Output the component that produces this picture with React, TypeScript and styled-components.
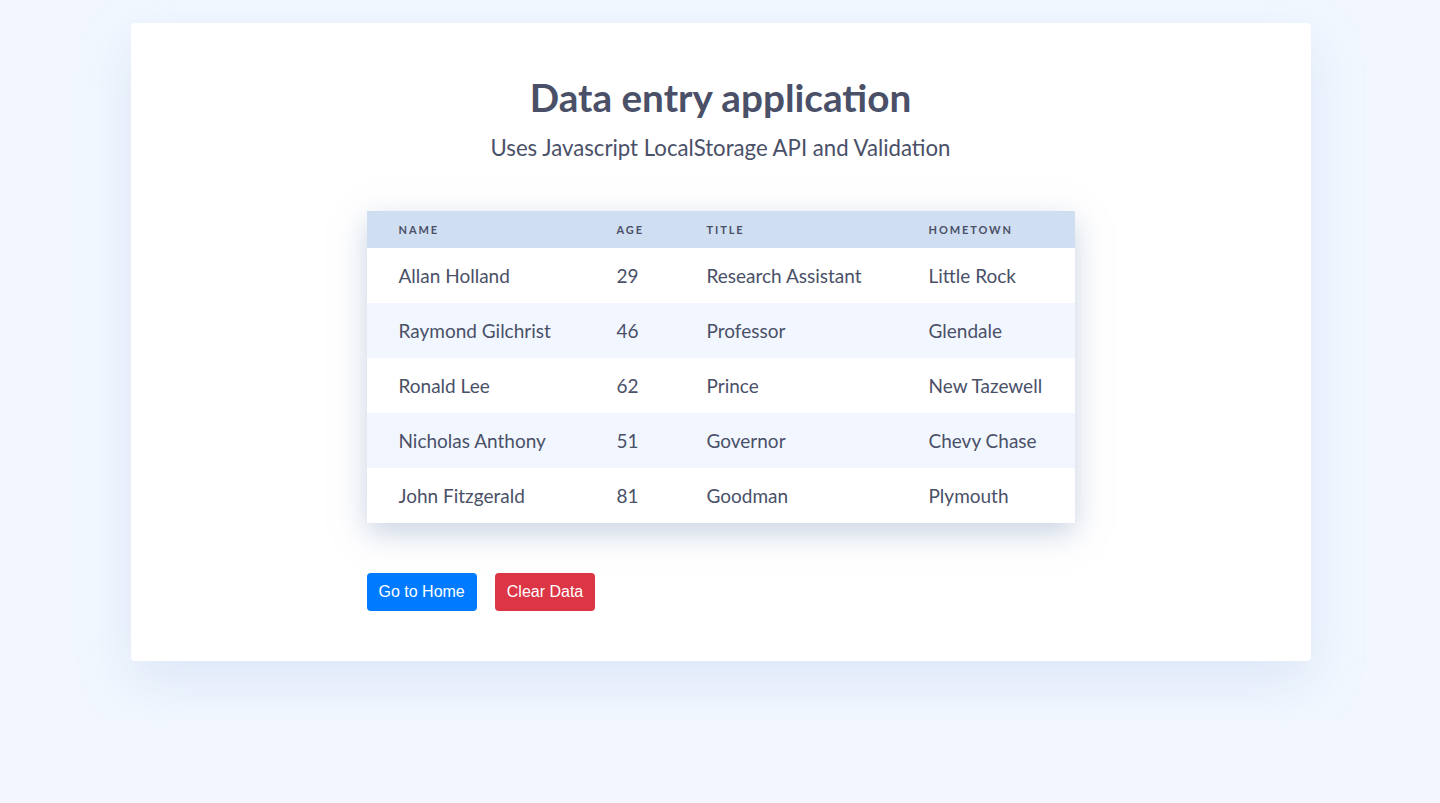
import styled, { createGlobalStyle } from 'styled-components';

const GlobalStyle = createGlobalStyle`
  html, body {
    margin: 0;
    padding: 0;
    background-color: #f2f7ff;
    font-family: Lato, 'Open Sans', sans-serif;
    color: #4a5068;
  }
`;

const Page = styled.div`
  padding: 23px 0 60px 1px;
`;

const Card = styled.div`
  width: 1180px;
  margin: 0 auto;
  box-sizing: border-box;
  background-color: #fff;
  border-radius: 4px;
  padding: 50px 0 50px;
  box-shadow: 0 20px 50px rgba(180, 200, 230, 0.35);
`;

const Title = styled.h1`
  margin: 0;
  text-align: center;
  font-size: 38.7px;
  font-weight: 700;
  line-height: 48px;
  color: #4a5068;
`;

const Subtitle = styled.p`
  margin: 12px 0 0;
  text-align: center;
  font-size: 22.2px;
  line-height: 30px;
  color: #4a5068;
`;

const Inner = styled.div`
  width: 60%;
  margin: 48px auto 0;
`;

const Table = styled.table`
  width: 100%;
  border-collapse: collapse;
  box-shadow: 0 10px 28px rgba(150, 170, 200, 0.5);
`;

const HeadRow = styled.tr`
  background-color: #cfdef0;
`;

const Th = styled.th<{ $width?: number }>`
  text-align: left;
  padding: 0 0 0 32px;
  height: 37px;
  width: ${(p) => (p.$width ? `${p.$width}px` : 'auto')};
  font-size: 11px;
  font-weight: 700;
  letter-spacing: 1.9px;
  text-transform: uppercase;
  color: #4a5068;
`;

const Row = styled.tr<{ $striped?: boolean }>`
  background-color: ${(p) => (p.$striped ? '#f2f7ff' : '#fff')};
`;

const Td = styled.td`
  padding: 0 0 0 32px;
  height: 55px;
  font-size: 19px;
  color: #4a5068;
`;

const Actions = styled.div`
  display: flex;
  gap: 18px;
  margin-top: 50px;
`;

const Button = styled.button<{ $variant: 'primary' | 'danger' }>`
  font-family: 'Liberation Sans', Arial, sans-serif;
  font-size: 16px;
  line-height: 24px;
  padding: 7px 12px;
  border: none;
  border-radius: 4px;
  color: #fff;
  cursor: pointer;
  background-color: ${(p) => (p.$variant === 'primary' ? '#007bff' : '#dc3545')};
`;

const people = [
  { name: 'Allan Holland', age: 29, title: 'Research Assistant', hometown: 'Little Rock' },
  { name: 'Raymond Gilchrist', age: 46, title: 'Professor', hometown: 'Glendale' },
  { name: 'Ronald Lee', age: 62, title: 'Prince', hometown: 'New Tazewell' },
  { name: 'Nicholas Anthony', age: 51, title: 'Governor', hometown: 'Chevy Chase' },
  { name: 'John Fitzgerald', age: 81, title: 'Goodman', hometown: 'Plymouth' },
];

export default function App() {
  return (
    <>
      <GlobalStyle />
      <Page>
        <Card>
          <Title>Data entry application</Title>
          <Subtitle>Uses Javascript LocalStorage API and Validation</Subtitle>
          <Inner>
            <Table>
              <thead>
                <HeadRow>
                  <Th $width={186}>Name</Th>
                  <Th $width={58}>Age</Th>
                  <Th $width={190}>Title</Th>
                  <Th>Hometown</Th>
                </HeadRow>
              </thead>
              <tbody>
                {people.map((p, i) => (
                  <Row key={p.name} $striped={i % 2 === 1}>
                    <Td>{p.name}</Td>
                    <Td>{p.age}</Td>
                    <Td>{p.title}</Td>
                    <Td>{p.hometown}</Td>
                  </Row>
                ))}
              </tbody>
            </Table>
            <Actions>
              <Button $variant="primary">Go to Home</Button>
              <Button $variant="danger">Clear Data</Button>
            </Actions>
          </Inner>
        </Card>
      </Page>
    </>
  );
}
